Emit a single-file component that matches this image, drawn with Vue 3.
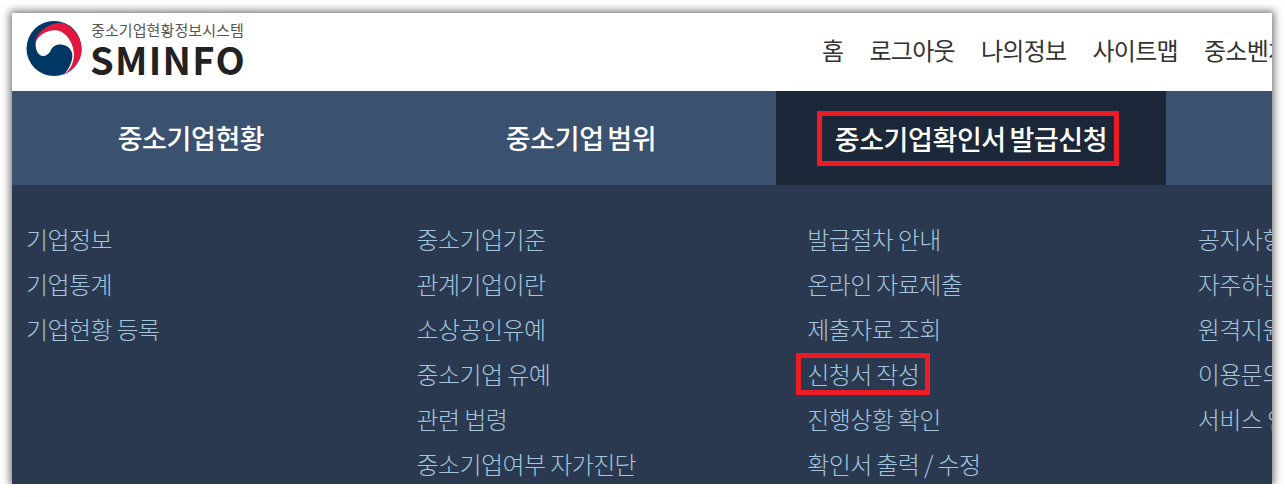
<script setup>
const tabs = [
  { label: '중소기업현황' },
  { label: '중소기업 범위' },
  { label: '중소기업확인서 발급신청', active: true },
  { label: '' }
]
const nav = ['홈', '로그아웃', '나의정보', '사이트맵', '중소벤처기업부']
const columns = [
  ['기업정보', '기업통계', '기업현황 등록'],
  ['중소기업기준', '관계기업이란', '소상공인유예', '중소기업 유예', '관련 법령', '중소기업여부 자가진단'],
  ['발급절차 안내', '온라인 자료제출', '제출자료 조회', '신청서 작성', '진행상황 확인', '확인서 출력 / 수정'],
  ['공지사항', '자주하는 질문', '원격지원', '이용문의', '서비스 안내']
]
const marked = '신청서 작성'
</script>

<template>
  <div class="frame">
    <header class="top">
      <div class="logo">
        <svg class="mark" width="56" height="56" viewBox="0 0 56 56">
          <circle cx="28" cy="27.500" r="27.500" fill="#003764" />
          <path d="M9 19.500C13 9 24 1.800 36.300 1.800C48 5 56 18 55.700 30C55 40 47 50 38 53.500C44 49 48 42 48 33.500C48 22 40 10 29.700 9.200C20 9 11 15 9.700 21.800Z" fill="#e4173e" />
          <path d="M9.700 21.800C11 15 20 9 29.700 9.200C40 10 48 22 48 33.500C48 42 44 49 38 53.500C43 48 47 40 46.300 33C45 27 40 23.500 34.700 23.500C30 23.500 27 25 25 29C23 33 20 35 17 35C12 35 9 28 9.700 21.800Z" fill="#fff" />
        </svg>
        <div class="logo-text">
          <span class="logo-sub">중소기업현황정보시스템</span>
          <span class="logo-name">SMINFO</span>
        </div>
      </div>
      <nav class="nav">
        <a v-for="n in nav" :key="n">{{ n }}</a>
      </nav>
    </header>

    <div class="tabs">
      <div v-for="(t, i) in tabs" :key="i" class="tab" :class="{ active: t.active }">
        <span :class="{ marked: t.active }">{{ t.label }}</span>
      </div>
    </div>

    <div class="menus">
      <ul v-for="(col, i) in columns" :key="i" class="menu">
        <li v-for="item in col" :key="item">
          <span :class="{ marked: item === marked }">{{ item }}</span>
        </li>
      </ul>
    </div>
  </div>
</template>

<style>
body {
  background: #fff;
  overflow: hidden;
}
</style>

<style scoped>
.frame {
  width: 1260px;
  height: 471px;
  margin: 13px 0 0 12px;
  overflow: hidden;
  background: #2a3950;
  box-shadow: 0 0 8px 2px rgba(0, 0, 0, 0.55);
  font-family: "Noto Sans CJK KR", "Noto Sans", sans-serif;
}

.top {
  height: 78px;
  background: #fff;
  display: flex;
  align-items: flex-start;
  padding-left: 14px;
  white-space: nowrap;
}

.logo {
  display: flex;
  gap: 8px;
  padding-top: 8px;
}

.logo-text {
  display: flex;
  flex-direction: column;
  color: #222;
}

.logo-sub {
  padding-left: 1px;
  font-size: 15px;
  line-height: 18px;
  letter-spacing: 0.1px;
  color: #555;
}

.logo-name {
  font-size: 38px;
  line-height: 40px;
  font-weight: 700;
  letter-spacing: 1.3px;
}

.nav {
  display: flex;
  gap: 26px;
  flex: 0 0 450px;
  overflow: hidden;
  padding-top: 21px;
  margin-left: auto;
  font-size: 24px;
  line-height: 32px;
  letter-spacing: -0.7px;
  color: #333;
}

.tabs {
  display: flex;
  height: 94px;
  margin-left: -16px;
  background: #3a5170;
}

.tab {
  flex: 0 0 390px;
  display: flex;
  align-items: center;
  justify-content: center;
  padding-bottom: 2px;
  box-sizing: border-box;
  color: #fff;
  font-size: 27px;
  font-weight: 500;
  letter-spacing: -0.4px;
  word-spacing: -2px;
  white-space: nowrap;
}

.tab.active {
  background: #1c2839;
  padding-bottom: 0;
}

.tab .marked {
  display: inline-block;
  line-height: 45px;
  margin-left: -6px;
  padding: 0 7px 0 13px;
  border: 5px solid #ed1c24;
}

.menus {
  display: flex;
  padding-top: 31px;
}

.menu {
  flex: 0 0 390.600px;
  box-sizing: border-box;
  list-style: none;
  margin: 0;
  padding: 0 0 0 14px;
  font-size: 24px;
  font-weight: 300;
  letter-spacing: -0.6px;
  color: #a3c6de;
  white-space: nowrap;
}

.menu li {
  height: 45px;
  line-height: 45px;
  display: flex;
  align-items: center;
}

.menu .marked {
  line-height: 32px;
  margin-left: -11px;
  padding: 0 6px;
  border: 5px solid #ed1c24;
}
</style>
